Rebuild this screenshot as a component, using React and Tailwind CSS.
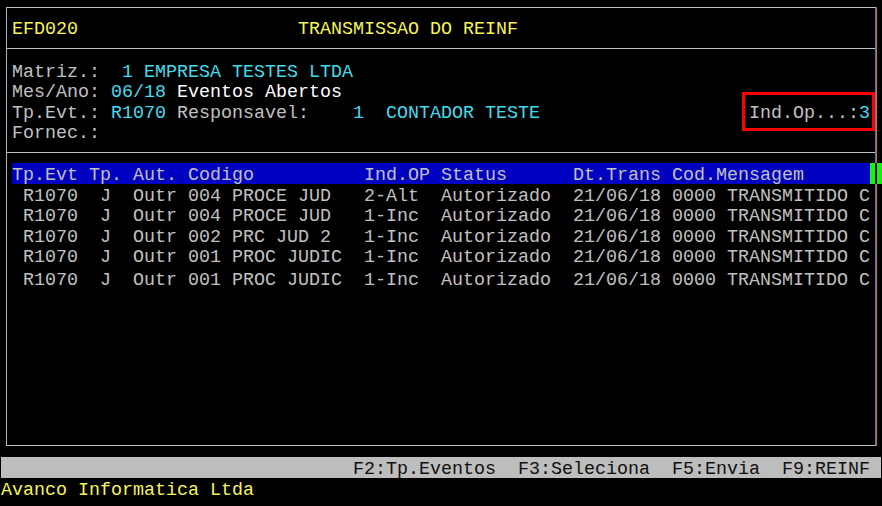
import React from "react";

const tableRows = [
  " R1070  J  Outr 004 PROCE JUD   2-Alt  Autorizado  21/06/18 0000 TRANSMITIDO C",
  " R1070  J  Outr 004 PROCE JUD   1-Inc  Autorizado  21/06/18 0000 TRANSMITIDO C",
  " R1070  J  Outr 002 PRC JUD 2   1-Inc  Autorizado  21/06/18 0000 TRANSMITIDO C",
  " R1070  J  Outr 001 PROC JUDIC  1-Inc  Autorizado  21/06/18 0000 TRANSMITIDO C",
  " R1070  J  Outr 001 PROC JUDIC  1-Inc  Autorizado  21/06/18 0000 TRANSMITIDO C",
];

// row heights copied from the terminal capture (lines are not evenly spaced)
const rowHeights = ["h-[20px]", "h-[21px]", "h-[20px]", "h-[20px]", "h-[20px] mt-[3px]"];

const App = () => {
  return (
    <div className="relative w-[882px] h-[506px] overflow-hidden bg-black text-[#c0c0c0] font-['Liberation_Mono','Courier_New',monospace] text-[18.33px] whitespace-pre">
      {/* frame */}
      <div className="ml-[6px] mt-[7px] w-[870px] flex flex-col border border-[#c0c0c0] border-l-[#a8b4c8] border-r-[#4a78c8] shadow-[1px_0_0_#b87a40]">
        {/* title */}
        <div className="h-[41px] border-b border-[#c0c0c0] pl-[5px] pt-[4px] flex items-center leading-[20px]">
          <span className="text-[#f4f45a]">EFD020</span>
          <span>{"                    "}</span>
          <span className="text-[#f4f45a]">TRANSMISSAO DO REINF</span>
        </div>

        {/* header info */}
        <div className="relative h-[104px] border-b border-[#c0c0c0] pl-[5px] pt-[14px] leading-[20.33px]">
          <div>
            {"Matriz.:  "}
            <span className="text-[#40dcee]">1 EMPRESA TESTES LTDA</span>
          </div>
          <div>
            {"Mes/Ano: "}
            <span className="text-[#40dcee]">06/18</span>
            <span className="text-white"> Eventos Abertos</span>
          </div>
          <div>
            {"Tp.Evt.: "}
            <span className="text-[#40dcee]">R1070</span>
            {" Responsavel:    "}
            <span className="text-[#40dcee]">1  CONTADOR TESTE</span>
            {"                   Ind.Op...:"}
            <span className="text-[#40dcee]">3</span>
          </div>
          <div>Fornec.:</div>

          {/* red highlight box */}
          <div className="absolute left-[735px] top-[43px] w-[133px] h-[39px] border-[3px] border-[#ff0000]" />
        </div>

        {/* table */}
        <div className="relative h-[292px] pl-[5px] pt-[10px]">
          <div className="w-[858px] h-[21px] bg-[#0000c0] pt-[3px] leading-[20px]">
            Tp.Evt Tp. Aut. Codigo          Ind.OP Status      Dt.Trans Cod.Mensagem
          </div>
          {tableRows.map((row, i) => (
            <div key={i} className={`${rowHeights[i]} pt-[3px] leading-[20px]`}>
              {row}
            </div>
          ))}

          {/* scroll marker */}
          <div className="absolute left-[863px] top-[10px] w-[12px] h-[21px] bg-[#16f016] flex justify-center">
            <div className="w-[2px] h-full bg-black" />
          </div>
        </div>
      </div>

      {/* function keys bar */}
      <div className="ml-[1px] mt-[11px] w-[880px] h-[21px] bg-[#bdbdbd] text-[#101010] pl-[11px] pt-[3px] leading-[20px]">
        {"                               F2:Tp.Eventos  F3:Seleciona  F5:Envia  F9:REINF"}
      </div>
      <div className="pl-[1px] h-[20px] pt-[3px] leading-[20px] text-[#f4f45a]">Avanco Informatica Ltda</div>
    </div>
  );
};

export default App;
